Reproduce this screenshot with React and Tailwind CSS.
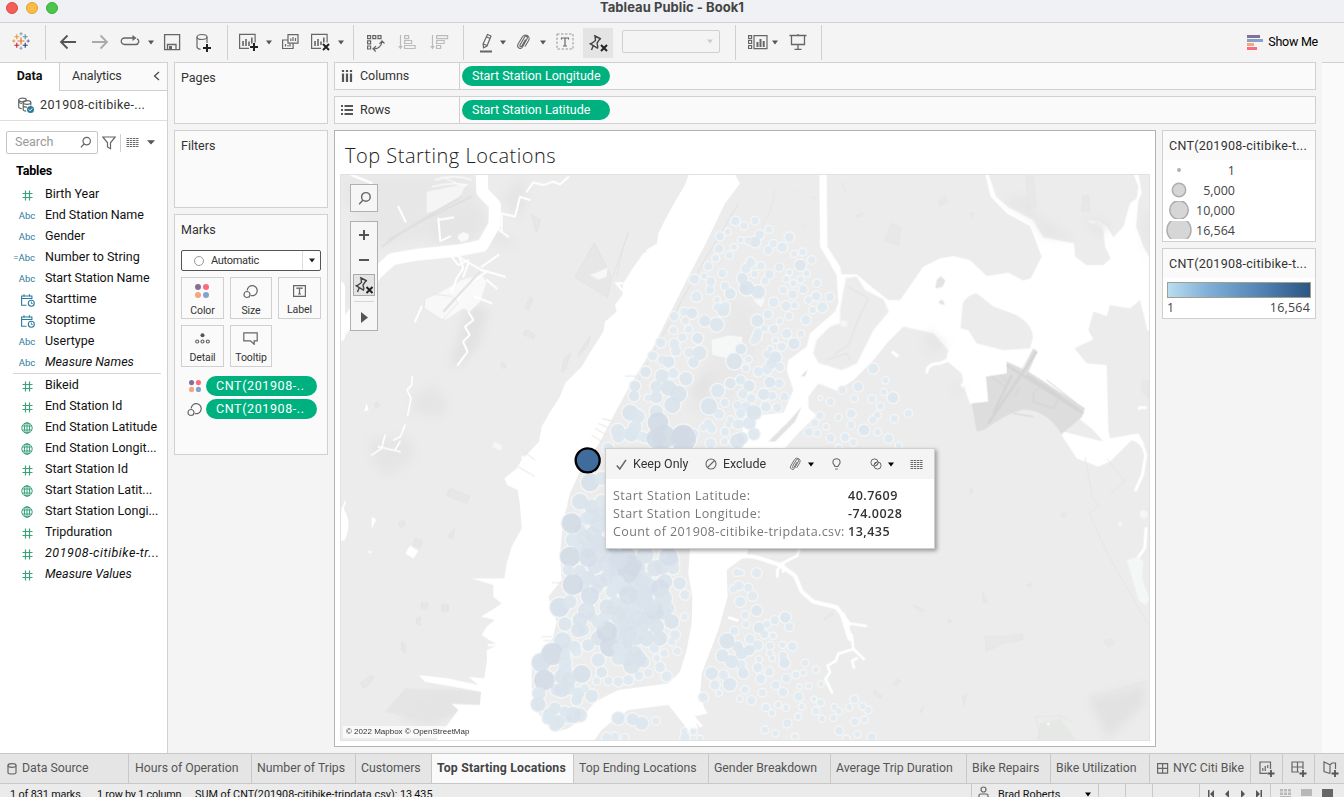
import React from "react";

const UI = "font-['Roboto','Liberation_Sans',sans-serif]";
const BOOK = "font-['Open_Sans','Noto_Sans',sans-serif]";

function Svg({ w, h, className = "", children, stroke = "#666", sw = 1.2 }) {
  return (
    <svg width={w} height={h} viewBox={`0 0 ${w} ${h}`} fill="none" stroke={stroke} strokeWidth={sw} className={`shrink-0 ${className}`}>
      {children}
    </svg>
  );
}

const Caret = ({ className = "", fill = "#555" }) => (
  <Svg w={8} h={5} className={className} stroke="none"><path d="M1 0.5h6L4 4.5z" fill={fill} /></Svg>
);

/* ---------- toolbar ---------- */

function TableauMark() {
  const plus = [
    [9, 9, 3.5, "#e8762d", 1.2], [4.8, 4.8, 2.5, "#e8953d", 1.1], [13.2, 4.8, 2.5, "#5b8fa5", 1.1], [4.8, 13.2, 2.5, "#c72037", 1.1], [13.2, 13.2, 2.5, "#1f447e", 1.1],
    [9, 1.8, 1.6, "#7099a6", 0.9], [9, 16.2, 1.6, "#7a8fc0", 0.9], [1.8, 9, 1.6, "#eb912c", 0.9], [16.2, 9, 1.6, "#5b6591", 0.9],
  ];
  return (
    <Svg w={18} h={18} className="ml-[12px] mb-[3px]">
      {plus.map(([x, y, r, c, s], i) => <path key={i} d={`M${x - r} ${y}h${2 * r}M${x} ${y - r}v${2 * r}`} stroke={c} strokeWidth={s} />)}
    </Svg>
  );
}

const Plus = ({ x, y }) => <path d={`M${x - 4} ${y}h8M${x} ${y - 4}v8`} stroke="#222" strokeWidth="2" />;
const Cross = ({ x, y }) => <path d={`M${x - 3} ${y - 3}l6 6M${x + 3} ${y - 3}l-6 6`} stroke="#222" strokeWidth="2" />;
const PinPath = () => <path d="M7 2.5l7 3.5M8 3l.5 4.5-4 3 -1.5.2 7.5 4.5 .3-1.5-.8-3.5L13 5.6M6.3 12.5L4.5 17" strokeLinejoin="round" />;

function Toolbar() {
  return (
    <div className="flex h-[39px] shrink-0 items-start pt-[2px]">
      <div className="flex h-[35px] w-[46px] items-center border-r border-[#d0d0d0]"><TableauMark /></div>
      <div className="flex h-[35px] w-[182px] items-center border-r border-[#d0d0d0]">
        <Svg w={18} h={16} className="ml-[13px] mb-[2px]" sw={1.8} stroke="#555"><path d="M17 8H2M8.5 1.500L2 8l6.500 6.500" /></Svg>
        <Svg w={18} h={16} className="ml-[14px] mb-[2px]" sw={1.8} stroke="#aaa"><path d="M1 8h15M9.500 1.500L16 8l-6.500 6.500" /></Svg>
        <Svg w={20} h={14} className="ml-[11px] mb-[3px]" sw={1.3}><path d="M13 4H4.500a3 3 0 0 0 0 6.500h11A3 3 0 0 0 17 4.800" /><path d="M12.500 1l4 3-4 3z" fill="#666" stroke="none" /></Svg>
        <Caret className="ml-[7px]" />
        <Svg w={18} h={18} className="ml-[8px] mb-px" sw={1.3}><path d="M1.600 1.600h15v15h-15zM4.500 16v-4.500h8.500V16" /><path d="M6 13h3v3.500H6z" fill="#666" stroke="none" /></Svg>
        <Svg w={18} h={20} className="ml-[14px]"><ellipse cx="7" cy="4" rx="5" ry="2.500" /><path d="M2 4v10c0 1.300 1.500 2 3.500 2.300M12 4v6" /><Plus x={12} y={15} /></Svg>
      </div>
      <div className="flex h-[35px] w-[126px] items-center border-r border-[#d0d0d0]">
        <Svg w={21} h={20} className="ml-[10px] mb-px"><path d="M11 16.400H1.600v-14h15.500v8" /><path d="M5 9v5M8 7v7M11 9.500V14M13.800 5.500v6" strokeWidth="1.600" /><Plus x={16} y={15} /></Svg>
        <Caret className="ml-[6px]" />
        <Svg w={18} h={18} className="ml-[8px] mb-[2px]"><path d="M7 1.600h10v8.500H7z" /><path d="M7 7H1.600v8.500h10.500V10M4.500 11v2.500M7 12v1.500M9 11v2.500M9.800 5.500V8M12 4v4M14.500 5V8" /></Svg>
        <Svg w={21} h={20} className="ml-[11px] mb-px"><path d="M11 16.400H1.600v-14h15.500v8" /><path d="M5 9v5M8 7v7M11 9.500V13M13.800 5.500v5" strokeWidth="1.600" /><Cross x={16} y={15} /></Svg>
        <Caret className="ml-[6px]" />
      </div>
      <div className="flex h-[35px] w-[110px] items-center border-r border-[#d0d0d0]">
        <Svg w={19} h={18} className="ml-[12px]"><path d="M1.600 1.600h3v3h-3zM6.800 1.600h3v3h-3zM12 1.600h3v3h-3zM1.600 6.800h3v3h-3zM1.600 12h3v3h-3zM7.500 14.800c4.500.3 8-2.500 8.500-7.500M10 12.300l-3 2.500 2.700 2.700M13.500 9.800l2.500-3 2.500 2.700" /></Svg>
        <Svg w={19} h={17} className="ml-[13px] mb-px" stroke="#bbb"><path d="M2.500 1v13M.8 12l1.700 2.500L4.200 12M6.600 1.600h4v3h-4zM6.600 6.500h7v3h-7zM6.600 11.500h10.500v3H6.600z" /></Svg>
        <Svg w={19} h={17} className="ml-[13px] mb-px" stroke="#bbb"><path d="M2.500 1v13M.8 12l1.700 2.500L4.200 12M6.600 1.600h11v3h-11zM6.600 6.500h7.500v3H6.600zM6.600 11.500h4v3h-4z" /></Svg>
      </div>
      <div className="flex h-[35px] w-[272px] items-center border-r border-[#d0d0d0]">
        <Svg w={14} h={20} className="ml-[15px]"><path d="M8.500 1.500l3.500 1.500-4 10-3.500 1.800-.4-4zM4.500 11l3.500 1.500M7.500 4l4 1.500" /><path d="M1 18.500h12" strokeWidth="2" /></Svg>
        <Caret className="ml-[6px]" />
        <PaperClip className="ml-[9px] mb-[2px]" />
        <Caret className="ml-[9px]" />
        <Svg w={18} h={17} className="ml-[9px] mb-[2px]" sw={1}><path d="M1 1h16v15H1z" strokeDasharray="2.500 1.500" stroke="#999" /><path d="M5.500 6.500V5h7v1.500M9 5v8M7 13h4" strokeWidth="1.200" /></Svg>
        <div className="ml-[9px] flex h-[30px] w-[30px] items-center justify-center bg-[#e4e4e4]">
          <Svg w={22} h={20} sw={1.4} stroke="#444"><PinPath /><Cross x={17} y={15} /></Svg>
        </div>
        <div className="ml-[9px] mb-[2px] flex h-[23px] w-[98px] items-center justify-end rounded-[2px] border border-[#d0d0d0] pr-[5px]"><Caret fill="#ccc" /></div>
      </div>
      <div className="flex h-[35px] w-[86px] items-center border-r border-[#d0d0d0]">
        <Svg w={21} h={16} className="ml-[11px] mb-[2px]"><path d="M1.600 1.600h3v3h-3zM1.600 6.500h3v3h-3zM1.600 11.500h3v3h-3zM7 1.600h13v13H7z" /><path d="M10.500 8v5M13.500 5v8M16.700 7v6" strokeWidth="2" /></Svg>
        <Caret className="ml-[3px]" />
        <Svg w={18} h={18} className="ml-[10px] mb-px" sw={1.300}><path d="M.5 2.500h17M2.500 2.500v9h13v-9M9 11.500V16M5.500 16.300h7M9 1v1" /></Svg>
      </div>
      <div className="flex h-[35px] flex-1 items-center justify-end pr-[26px]">
        <div className="mr-[5px] flex w-4 flex-col gap-px">
          <i className="h-[3px] w-[13px] bg-[#856f97]" /><i className="h-[3px] w-4 bg-[#84a3c8]" /><i className="h-[3px] w-[7px] bg-[#f4a67d]" /><i className="h-[3px] w-[10px] bg-[#fb6a7f]" />
        </div>
        <span className="text-[12.500px] tracking-[-0.25px] text-black">Show Me</span>
      </div>
    </div>
  );
}

function PaperClip({ className = "" }) {
  return (
    <Svg w={14} h={16} className={className} sw={1.1}>
      <path d="M4 11L8.600 3a1.500 1.500 0 0 1 2.600 1.500L6.500 13a2.600 2.600 0 0 1-4.600-2.500L6.300 3A3.600 3.600 0 0 1 12.600 6.500L9 12.500M4 11a1 1 0 0 0 1.800 1L9.500 5.500" />
    </Svg>
  );
}

/* ---------- data pane ---------- */

function FieldIcon({ kind }) {
  if (kind === "num") return <Svg w={11} h={11} stroke="#3ba27a" sw={1.2}><path d="M3.500 .5v10M7.500 .5v10M.5 3.500h10M.5 7.500h10" /></Svg>;
  if (kind === "geo") return <Svg w={12} h={12} stroke="#3ba27a" sw={1}><circle cx="6" cy="6" r="5.200" /><ellipse cx="6" cy="6" rx="2.600" ry="5.200" /><path d="M1.300 4h9.400M1.300 8h9.400M6 .8v10.400" /></Svg>;
  if (kind === "date") return <Svg w={14} h={13} stroke="#2b7b9b" sw={1.1} className="translate-x-px"><path d="M5.500 11.200H.6V2h10.300v3M.6 4.500h10.300M3 .2v2.500M8.500 .2v2.500" /><circle cx="10.300" cy="9.200" r="3" /><path d="M10.300 7.500v2h1.400" strokeWidth=".9" /></Svg>;
  return <span className="text-[9.500px] leading-none text-[#2b7b9b]">{kind === "calc" ? "=Abc" : "Abc"}</span>;
}

const Field = ({ kind, name, italic }) => (
  <div className="flex h-[21px] items-center">
    <div className={kind === "calc" ? "flex w-[30px] justify-end pr-[7px] pt-px" : "flex w-[30px] justify-center pt-px"}><FieldIcon kind={kind} /></div>
    <span className={`whitespace-nowrap pl-[3px] text-[12.500px] text-[#111] ${italic ? "italic" : ""} ${name.startsWith("2019") ? "tracking-[0.55px]" : italic ? "tracking-[0.02px]" : name.endsWith("Name") ? "tracking-[-0.08px]" : ""}`}>{name}</span>
  </div>
);

const DIMS = [["num", "Birth Year"], ["abc", "End Station Name"], ["abc", "Gender"], ["calc", "Number to String"], ["abc", "Start Station Name"], ["date", "Starttime"], ["date", "Stoptime"], ["abc", "Usertype"], ["abc", "Measure Names", true]];
const MEAS = [["num", "Bikeid"], ["num", "End Station Id"], ["geo", "End Station Latitude"], ["geo", "End Station Longit..."], ["num", "Start Station Id"], ["geo", "Start Station Latit..."], ["geo", "Start Station Longi..."], ["num", "Tripduration"], ["num", "201908-citibike-tr...", true], ["num", "Measure Values", true]];

function Magnifier({ className = "", w = 14 }) {
  return <svg width={w} height={w} viewBox="0 0 14 14" className={`shrink-0 ${className}`} fill="none" stroke="#666" strokeWidth="1.3"><circle cx="8.300" cy="5.500" r="4" /><path d="M5.400 8.600L2 12.300" /></svg>;
}

const GridLines = ({ className = "" }) => (
  <Svg w={13} h={11} className={className} sw={1}><path d="M.5 1.500h12M.5 3.500h12M.5 5.500h12M.5 7.500h12M.5 9.500h12" strokeDasharray="2.500 .7" /></Svg>
);

function DataPane() {
  return (
    <div className="flex w-[168px] shrink-0 flex-col border-r border-t border-[#d0d0d0] bg-white">
      <div className="flex h-[28px]">
        <div className="flex w-[59px] items-center justify-center pb-[2px] text-[12.500px] font-bold text-[#111]">Data</div>
        <div className="flex flex-1 items-center justify-between border-b border-l border-[#d0d0d0] bg-[#fafafa] pl-[12px] pr-[7px] pb-px text-[12.500px] text-[#333]">
          <span className="tracking-[-0.15px]">Analytics</span>
          <Svg w={7} h={10} stroke="#444"><path d="M6 1L1.500 5 6 9" /></Svg>
        </div>
      </div>
      <div className="flex h-[30px] items-center border-b border-[#dedede] pl-[18px]">
        <Svg w={18} h={17}>
          <ellipse cx="4.500" cy="3" rx="3.800" ry="1.800" /><path d="M.7 3v7c0 1 1.500 1.500 3 1.700M4 6.500c-1 0-2.500-.5-3.300-1.500" /><ellipse cx="9" cy="5.500" rx="3.800" ry="1.800" /><path d="M5.200 5.500v7c0 1 1.500 1.600 3 1.700M12.800 5.500v3M5.200 9c1 1 2.500 1.200 4 1.100" />
          <circle cx="12.500" cy="12.500" r="3.500" fill="#2b7b9b" stroke="none" /><path d="M10.800 12.500l1.300 1.300 2.200-2.500" stroke="#fff" strokeWidth="1" />
        </Svg>
        <span className="ml-[4px] text-[12.500px] tracking-[0.35px] text-[#333]">201908-citibike-...</span>
      </div>
      <div className="flex h-[43px] items-center pl-[6px]">
        <div className="flex h-[23px] w-[92px] items-center justify-between rounded-[2px] border border-[#c6c6c6] pl-2 pr-[5px] text-[12.500px] text-[#999]">Search<Magnifier w={13} /></div>
        <Svg w={14} h={14} className="ml-[4px]"><path d="M.8 1h12.400L8.500 6.800v6L5.500 11V6.800z" /></Svg>
        <div className="ml-[4px] h-[18px] w-px bg-[#d0d0d0]" />
        <GridLines className="ml-[5px]" />
        <svg width="10" height="5" viewBox="0 0 10 5" className="ml-[7px]"><path d="M1 .3h8L5 4.500z" fill="#555" /></svg>
      </div>
      <div className="h-[20px] pl-[16px] text-[12.500px] font-bold leading-[14px] tracking-[-0.15px] text-black">Tables</div>
      <div className="flex flex-col pl-[12px]">{DIMS.map((f) => <Field key={f[1]} kind={f[0]} name={f[1]} italic={f[2]} />)}</div>
      <div className="ml-[13px] mr-[6px] mb-px h-px shrink-0 bg-[#d6d6d6]" />
      <div className="flex flex-col pl-[12px]">{MEAS.map((f) => <Field key={f[1]} kind={f[0]} name={f[1]} italic={f[2]} />)}</div>
    </div>
  );
}

/* ---------- cards ---------- */

const Dots = ({ s }) => (
  <svg width={s} height={s} viewBox="0 0 14 14" className="shrink-0"><circle cx="3" cy="3" r="3" fill="#856f97" /><circle cx="11" cy="3" r="3" fill="#fb6a7f" /><circle cx="3" cy="11" r="3" fill="#f4a67d" /><circle cx="11" cy="11" r="3" fill="#84a3c8" /></svg>
);
const SizeIcon = () => <Svg w={15} h={15}><path d="M4.200 6.500a5 5 0 1 1 3.700 5" /><circle cx="4" cy="10.500" r="3" /></Svg>;

const MarkButton = ({ label, children }) => (
  <div className="flex h-[42px] flex-col items-center border border-[#d0d0d0] bg-[#fafafa] pt-[6px]">
    <div className="flex h-[14px] items-center pr-px">{children}</div>
    <span className="mt-[4px] text-[10.500px] leading-[17px] tracking-[-0.1px] text-[#333]">{label}</span>
  </div>
);

const Pill = ({ children, small }) => (
  <div className={small ? "flex h-5 w-[111px] items-center rounded-full bg-[#00b180] pl-[10px] text-[12.500px] tracking-[0.600px] text-white" : "flex h-5 w-[148px] items-center rounded-full bg-[#00b180] pl-[10px] text-[12.500px] tracking-[0.02px] text-white"}>{children}</div>
);

function Cards() {
  return (
    <div className="ml-[6px] flex w-[154px] shrink-0 flex-col gap-[6px] text-[12.500px] text-[#333]">
      <div className="h-[62px] border border-[#d0d0d0] bg-[#fafafa] pl-[6px] pt-[6px] leading-[18px]">Pages</div>
      <div className="h-[78px] border border-[#d0d0d0] bg-[#fafafa] pl-[6px] pt-[6px] leading-[18px]">Filters</div>
      <div className="h-[241px] border border-[#d0d0d0] bg-[#fafafa] px-[6px] pt-[6px] leading-[18px]">
        Marks
        <div className="mt-[11px] flex h-[21px] items-center rounded-[2px] border border-[#555] bg-white text-[11px]">
          <i className="ml-[12px] mr-[7px] size-[10px] rounded-full border border-[#999]" />
          <span className="flex-1 tracking-[-0.3px]">Automatic</span>
          <div className="flex h-full w-[18px] items-center justify-center border-l border-[#ddd]"><Caret fill="#222" /></div>
        </div>
        <div className="mt-[6px] grid grid-cols-[43px_42px_43px] gap-[6px]">
          <MarkButton label="Color"><Dots s={14} /></MarkButton>
          <MarkButton label="Size"><SizeIcon /></MarkButton>
          <MarkButton label="Label"><Svg w={13} h={12}><path d="M.6 .6h11.800v10.800H.600zM4 4V3.200h5V4M6.500 3.200V9M5 9h3" /></Svg></MarkButton>
          <MarkButton label="Detail"><Svg w={15} h={11}><circle cx="7.500" cy="2.200" r="2" fill="#555" stroke="none" /><circle cx="2.200" cy="8.500" r="1.500" /><circle cx="7.500" cy="8.500" r="1.500" /><circle cx="12.800" cy="8.500" r="1.500" /></Svg></MarkButton>
          <MarkButton label="Tooltip"><Svg w={15} h={13}><path d="M.8 .8h13.400v8h-3v3.500L7.500 8.800H.800z" /></Svg></MarkButton>
        </div>
        <div className="mt-[9px] flex items-center gap-[5px] pl-2"><Dots s={12} /><Pill small>CNT(201908-..</Pill></div>
        <div className="mt-[3px] flex items-center gap-[4px] pl-[6px]"><SizeIcon /><Pill small>CNT(201908-..</Pill></div>
      </div>
    </div>
  );
}

const Shelf = ({ name, icon, pill }) => (
  <div className="flex h-[28px] w-[982px] items-center border border-[#d0d0d0] bg-[#fafafa] text-[12.500px] text-[#333]">
    <div className="flex h-full w-[125px] items-center border-r border-[#d0d0d0] pl-[6px]">{icon}<span className="ml-[7px] tracking-[-0.05px]">{name}</span></div>
    <div className="pl-[2px]"><Pill>{pill}</Pill></div>
  </div>
);

/* ---------- map ---------- */
/* Map space: three units to a pixel, split in four tiles. */

const NW = [1201,273,13,1178,305,9,1155,319,12,1152,356,13,1197,351,9,1183,376,11,1142,385,10,1120,409,12,1162,430,12,1108,438,9,1127,455,13,1078,448,14,1125,480,12,1170,468,12,1186,491,16,1085,500,15,1146,509,9,1165,540,19,1172,527,12,1148,532,12,1048,545,12,1071,550,16,1017,559,13,1051,572,11,1109,573,17,1145,584,21,1015,601,11,1061,598,11,1042,622,12,1088,625,16,977,638,14,1018,642,15,1023,663,15,1062,668,14,1094,669,21,1076,697,16,953,678,14,982,690,14,1001,696,17,1216,658,14,1198,694,24,932,726,16,981,738,20,1015,730,15,1053,746,20,900,768,16,964,770,18,1001,774,23,1030,792,25,1012,825,24,897,798,16,940,804,11,964,802,18,1148,782,20,1186,760,16,1216,750,13,1122,829,25,1169,818,12,1207,826,12,1152,852,15,886,848,24,908,860,21,964,845,20,969,878,31,848,903,21,900,893,20,885,912,20,921,920,15,985,920,36,1045,918,34,1075,912,15,1120,882,14,1105,893,10,1130,896,13,1170,905,12,1207,883,14,1186,869,10,1216,852,11,1180,884,9,1222,445,16,1228,475,14,1217,330,7];
const NE = [45,272,11,12,287,11,87,298,10,59,314,13,45,336,16,25,332,11,2,330,8,148,322,14,100,341,11,127,352,14,85,361,12,188,366,10,162,372,9,215,390,11,181,406,17,32,397,14,18,415,14,63,408,11,118,412,12,88,433,13,44,432,10,75,453,11,200,430,9,148,427,8,138,447,9,182,448,9,160,460,9,231,460,11,20,474,22,55,486,20,130,480,11,190,478,12,158,493,13,229,498,13,206,510,11,270,501,12,101,517,14,138,528,14,164,526,10,247,532,15,218,540,10,84,553,13,147,558,11,198,570,14,52,572,18,119,573,9,74,595,10,102,598,13,54,608,13,50,622,14,42,632,11,140,611,14,182,611,10,106,631,8,162,641,17,125,650,12,3,657,16,91,656,8,82,673,12,106,682,18,25,688,10,17,715,11,95,700,16,82,718,15,55,725,14,120,711,13,2,750,14,90,757,16,118,760,13,27,768,17,71,793,17,97,797,12,8,792,14,34,805,13,133,800,12,18,830,15,78,830,15,112,833,13,42,848,22,2,850,14,28,880,18,0,882,12,42,912,17,5,925,18,400,716,15,436,751,9,355,770,14,307,780,11,431,786,9,459,803,16,343,805,10,396,807,11,271,815,11,242,804,5,421,829,10,240,857,11,295,862,9,334,851,13,412,855,10,398,870,11,463,866,11,505,850,11,224,879,11,333,885,11,258,890,8,372,900,16,206,906,12,232,910,10,413,906,10,272,924,12,315,922,12,446,925,13,340,937,10,476,946,9,296,952,8];
const SW_BASE = [800,235,26,770,245,24,775,300,26,735,285,18,800,330,26,735,335,20,780,395,22,815,385,26,845,395,26,830,360,26,875,365,28,905,400,26,760,430,22,745,455,18,785,460,18,845,425,26,865,455,26,905,450,26,930,430,20,980,395,24,1010,375,22,945,455,24,990,440,22,830,470,18,835,520,22,860,515,24,905,485,24,930,500,26,870,545,26,910,550,26,940,545,24,985,530,24,735,555,22,745,585,18,770,545,16,810,545,18,850,590,24,880,595,26,870,640,24,860,655,20,900,655,22,925,680,18,880,675,22,790,610,22,690,700,20,680,725,22,700,760,20,665,765,18,725,795,16,670,860,20,735,840,20,700,850,14,640,850,18,690,640,16,760,350,24];
const SW = [820,40,16,850,5,18,890,0,20,930,8,15,965,10,30,1045,12,38,1127,25,15,1168,20,10,1207,18,22,765,142,27,800,130,20,735,200,24,770,215,22,800,200,20,710,265,30,755,250,20,790,270,26,712,314,20,750,310,24,790,325,26,705,365,30,760,368,28,800,360,22,700,405,17,735,410,20,714,449,31,765,483,27,674,517,29,705,500,20,755,528,26,690,567,20,730,585,22,683,618,26,652,657,33,618,683,28,628,735,31,612,775,20,610,808,22,645,838,20,661,870,18,715,840,24,718,635,18,725,650,15,690,680,20,695,715,18,680,765,22,740,717,27,760,630,18,790,675,20,800,712,16,785,738,11,820,738,12,770,783,19,730,775,18,815,590,31,825,635,30,890,692,25,910,670,24,850,670,20,880,480,28,880,410,32,890,390,31,975,460,28,985,490,26,960,530,28,945,515,24,1034,445,19,1050,480,14,1015,400,18,960,400,24,1000,365,28,850,375,28,930,360,26,820,430,25,850,440,20,795,440,22,920,440,22,930,480,24,840,500,16,815,515,22,850,545,24,790,560,20,900,520,22,880,570,24,920,570,24,900,610,22,935,610,24,965,575,22,1000,520,18,1010,560,22,975,610,22,870,620,22,850,640,18,1020,600,15,1048,545,10,1010,620,11,958,640,14,965,670,10,988,655,11,1027,649,11,975,697,15,995,724,15,940,714,12,912,722,13,880,735,15,850,740,14,700,735,22,690,660,16,750,760,12,690,830,16,660,820,18,1205,412,11,1210,452,13,1195,463,11,1214,501,14,1198,588,12,1176,618,23,1208,635,16,1162,662,19,1190,680,20,1130,715,19,1165,720,14,1184,748,20,1140,750,14,1152,774,8,1105,787,14,1214,792,8,850,850,19,893,853,18,920,865,20,963,857,11,1048,888,9,1075,890,9,1050,908,14,815,908,14,840,905,12,870,908,10,1095,910,8];
const SE = [50,414,14,3,413,8,2,453,10,25,458,12,38,483,14,2,500,14,50,527,16,15,540,11,18,568,10,136,547,16,104,556,12,80,568,11,57,578,16,148,576,12,73,598,12,99,602,9,30,612,14,53,631,15,90,632,11,128,630,9,157,634,13,28,645,16,5,655,18,90,654,9,97,670,8,57,673,9,129,662,12,134,684,16,195,684,10,53,698,14,3,690,14,88,710,12,10,715,16,190,713,8,228,704,9,168,720,10,139,730,12,62,732,14,107,750,12,179,755,6,206,753,8,243,747,8,15,764,11,67,773,11,129,772,13,176,785,13,34,796,12,222,792,7,241,803,10,78,817,11,114,809,9,138,818,9,96,834,9,228,828,10,185,815,8,283,817,9,297,829,9,328,817,9,343,793,11,367,814,9,384,825,10,174,845,9,142,865,12,246,851,9,280,849,9,344,860,11,373,854,9,75,885,10,106,895,9,297,887,12,352,898,9,165,905,9,319,912,10,395,906,12];

function triples(list, dx, dy) {
  const out = [];
  for (let i = 0; i < list.length; i += 3) out.push([list[i] + dx, list[i + 1] + dy, list[i + 2]]);
  return out;
}
const STATIONS = [...triples(SW_BASE, 0, 915), ...triples(NW, 0, 0), ...triples(NE, 1215, 0), ...triples(SW, 0, 915), ...triples(SE, 1215, 915)];
const shade = (r) => (r >= 30 ? "#d2dbe5" : r >= 27 ? "#d6dfe9" : r >= 22 ? "#d9e3ec" : r >= 16 ? "#dce6ee" : r >= 12 ? "#dfe9f0" : "#e2ebf0");

function MapView() {
  return (
    <svg width="810" height="567" viewBox="15 132 2430 1701" className="block">
      <rect x="15" y="132" width="2430" height="1701" fill="#ececec" />
      <defs><filter id="soft" x="-20%" y="-20%" width="140%" height="140%"><feGaussianBlur stdDeviation="12" /></filter></defs>

      {/* relief and parks, north-west */}
      <g fill="#e5e5e5" filter="url(#soft)">
        <path d="M20 140h380l30 60-60 110-230 40-70-90-50-60z" opacity=".6" /><path d="M280 250l150-30 30 60-60 60-110 0z" />
        <path d="M240 790l60-20 40 55-30 40-80-20z" /><path d="M400 520l60 20-30 110-60 60-25-10z" fill="#e2e2e2" /><path d="M500 200l60-60 20 60-30 70z" />
        <path d="M20 500l30-60 70 30-60 70z" opacity=".5" /><path d="M100 930l120-10 20 60-80 60-40-30z" /><path d="M240 1700l140-20 60 50-160 60-90-20z" />
        <path d="M470 300l60 30 20 20-80-10z" />
      </g>
      <path d="M150 1745l60-70 230 10 0 40-10 25-60-5-90 30z" fill="#e4e4e4" opacity=".8" />
      <path d="M275 185l120-25-20 40-70 40-30 10z" fill="#f5f5f5" />
      <path d="M160 330q90-55 250-130M140 350q80-60 240-150" stroke="#dedede" strokeWidth="5" fill="none" />
      <path d="M300 150q60-20 110 0M290 170q60-15 110-5M320 140l70 30" stroke="#fafafa" strokeWidth="4" fill="none" />
      <path d="M370 315l15-9 18 8-4 16-20 6-10-10z" fill="#f9f9f9" />
      <g stroke="#e0e0e0" strokeWidth="2" fill="#e7e7e7">
        <path d="M778 338l-58 104 98 60 12-60z" /><path d="M845 440q15-80 35-135M880 310l-30 80-15 50" fill="none" />
        <path d="M570 530l15-28 10 6-16 32zM572 600l28 14-4 12-30-12zM345 1075l58 24-8 20-60-22zM590 255l26 14-12 38-8-26zM125 815l10 10-8 10-10-8zM500 697l14 8-6 12-10-8zM190 1180l16-8 4 12-14 10zM345 1210l14-14-6 30-12-4zM260 1418l20 2-6 18-16-4zM76 1660l32-26 10 8-30 34zM320 1425h20v18h-20zM245 1465l12-6-2 26-10-4zM200 1535l12 10-2 24-10-8zM240 1225l22 10-8 18-20-8z" />
        <path d="M680 725l8-40 18-15-14 48zM730 670l36-52-8 30-26 30z" />
      </g>
      <path d="M790 425l28-12-4 28-24 8-26-14z" fill="#f6f8f7" />

      {/* Hackensack river and creeks */}
      <g stroke="#fff" fill="none" strokeLinejoin="round" strokeLinecap="round">
        <path d="M440 125l2 60 38 40-2 60-36 62-70 14-120 12-80 14-50 45-60 110-50 70" strokeWidth="36" strokeLinecap="butt" />
        <path d="M15 620V470" strokeWidth="30" />
        <path d="M500 300v-50l40 10 15-60 30 10M575 185l20-28 30 8 30-10 20 8 25-22M310 265l6 68 30-14M310 270l45-8M190 230l22 45" strokeWidth="6" />
        <path d="M370 380l70 40 70 20M440 410l50-35M350 380l20 25 30-15M455 450l30 25M420 500l50 20M480 290l40 30" strokeWidth="6" />
        <path d="M375 385l10 30-20 30-15 40M400 400l-15 40M345 545l50-80 60-40M260 530l-20 45M400 545l15 25-25 20 14 25-20 20 14 30-30 40" strokeWidth="6" />
        <path d="M232 740l-2 25-14 15 12 25-10 50M210 885l-14 35-20 10M110 975l30-20 10-40M130 950l65 15M180 960l15-25M30 1115q-8 20-8 45" strokeWidth="5" />
        <path d="M50 135l60 24" strokeWidth="7" />
      </g>
      <path d="M270 510l50-25 60-35 60-15 15 20-20 60-30 30-20-10-55 35z" fill="#fff" opacity=".7" />
      <path d="M270 505l30-12 50 5 20 20-48 52-55-35z" fill="#f8f8f8" stroke="#e6e6e6" strokeWidth="3" />
      <path d="M325 545l110-120" stroke="#e3e3e3" strokeWidth="7" />
      <path d="M95 820l6 20-14 4zM225 1247l25 16-15 22-24-15zM110 1160l14 8-14 28zM100 1262l12 3-10 6zM20 1130q35 40 10 100l-15 5z" fill="#fff" />
      <path d="M480 935l22 12-6 16-26-14z" fill="#f4f7f6" />

      {/* Hudson and upper bay */}
      <path fill="#fff" d="M1062 130L1050 165 1020 215 990 270 970 310 965 345 925 370 890 420 865 460 862 495 840 525 845 545 810 575 805 605 770 660 740 710 690 760 675 800 640 855 620 890 612 935 560 990 545 1015 508 1045 516 1065 548 1080 555 1125 560 1195 530 1250 515 1300 508 1345 410 1345 475 1365 475 1400 500 1420 478 1435 438 1460 480 1470 455 1490 440 1515 462 1530 490 1545 455 1560 456 1590 448 1645 400 1640 430 1665 340 1645 250 1635 270 1655 438 1685 435 1725 350 1722 370 1740 300 1835H775L800 1800 830 1775 880 1740 1000 1725 1060 1800 1090 1795 1075 1760 1115 1750 1095 1700 1100 1630 1150 1500 1178 1400 1175 1320 1235 1275 1275 1140 1340 930 1425 840 1230 860 1215 945 1065 1255 1060 1330 1072 1400 1070 1480 1055 1560 1035 1625 1000 1660 850 1680 780 1715 740 1765 700 1795 660 1805 600 1740 590 1670 590 1600 650 1535 665 1475 640 1400 680 1350 675 1270 685 1170 705 1090 745 1000 790 945 850 830 900 740 950 660 1000 560 1060 440 1110 345 1170 220 1215 160 1198 130z" />
      <g stroke="#e6e6e6" strokeWidth="3"><path d="M870 738h32M800 865l32 8M790 880l32 14M780 895l36 20M770 915l34 22M560 960l40 30M550 1010l50 30M650 1358h30M620 1520h30M625 1532h28" /></g>
      <path d="M965 345l-25 15 20 8-35 12 30 18M865 460l-20 0 18 22M845 525l18 10M812 575l15 10M560 980l40 25M458 1545h32M460 1575h30M675 1125l22 5" stroke="#fff" strokeWidth="7" fill="none" />
      <path d="M1205 215L1060 460 905 745" stroke="#e4e4e4" strokeWidth="4" fill="none" transform="translate(6 4)" />

      {/* Central Park */}
      <path d="M1190 500l70 30 20 70-80 200-60 60-80-20 60-140z" fill="#e8e8e8" filter="url(#soft)" />
      <path d="M1100 740l40-20-30 80-50 0z" fill="#e2e2e2" filter="url(#soft)" />
      <path d="M1130 630l50-14 42 4-2 40-28 30-60-16z" fill="#f5f8f7" /><path d="M1255 510l36-4-12 26z" fill="#f7f9f8" />

      {/* Harlem river, East river and sound */}
      <g transform="translate(1215 0)">
        <path fill="#fff" d="M238 130L240 350 290 435 295 520 285 545 210 610 200 650 145 690 140 720 160 780 130 850 50 935 130 960 165 920 230 855 205 835 205 800 235 760 290 782 340 750 400 690 440 640 490 590 580 610 625 660 618 690 665 730 672 770 690 822 745 815 738 740 800 730 800 695 845 715 880 655 892 665 865 725 1035 835 1012 862 1060 900 1090 935 970 905 965 915 1010 985 1075 1010 1110 995 1175 930 1215 945 1195 910 1110 925 1105 900 1100 705 1040 700 1003 655 1060 628 1045 600 1060 545 1100 558 1110 525 1170 535 1200 510 1222 600 1232 605V390L1210 350 1188 290 1195 212 1205 190 1195 130H1180L1195 170 1190 205 1170 220 1150 290 1120 322 1100 290 1075 272 1040 272 1090 300 1095 350 1112 385 1090 405H1040L1005 380 1002 340 910 322 880 270 805 232 768 200 745 130H735L752 200 800 250 870 288 905 380 872 445 850 452 805 428 740 438 690 390 640 378 600 385 550 410 480 510 445 510 400 475 350 433 305 433 300 410 262 350 260 130z" />
        <path fill="#ececec" stroke="#f5f5f5" strokeWidth="3" d="M318 445L350 440 375 480 430 508 446 545 400 600 350 700 305 720 235 698 220 670 230 630 270 590 300 580 300 540z" />
        <path d="M325 470l60 35-25 50-35 90-45 30M260 690l60-20 10 20" stroke="#e2e2e2" strokeWidth="3" fill="none" />
        <path d="M298 572h24v18h-18z" fill="#f4f7f6" />
        <path fill="#ececec" d="M668 520Q680 495 710 490L760 530 830 555Q880 585 878 625L870 655 790 660 710 640 685 600 662 595z" />
        <path fill="#e3e3e3" d="M590 450l12-12 14 14-8 18-22 6zM595 515l12-6 8 16-16-4zM182 740l20-22-6 20zM150 870l35-40-20 45-60 60-20 0z" />
        <path fill="#dddddd" d="M738 740L800 730 800 695 850 718 880 655 892 665 865 725 1035 835 1025 862 965 912Q920 840 850 838Q800 850 735 898L710 905 695 820 745 815z" />
        <path d="M800 705L1030 850M890 665L745 880M815 735L760 850M860 735L1015 838" stroke="#d4d4d4" strokeWidth="7" fill="none" />
        <path d="M755 740l40 30M780 735l30 25M880 790l20-20 60 25-20 40-60-20zM840 770l-15 25M900 750l110 90M920 750l90 70M820 850l60 10" stroke="#d4d4d4" strokeWidth="3" fill="none" />
        <path d="M560 730q0-30 40-30l50-20" stroke="#fff" strokeWidth="9" fill="none" /><path d="M665 770l30-35" stroke="#fff" strokeWidth="12" /><path d="M455 665l20 14M1195 838l5-5h20" stroke="#fff" strokeWidth="9" fill="none" />
        <g fill="#e5e5e5" filter="url(#soft)"><path d="M790 210l70-10 30 60 90 50 10 15-80-10-30-50z" /><path d="M1040 265l60 10-10 40-40-20zM1210 250l25 0v130l-20-50z" /><path d="M560 600l60 50-60 20zM630 770l35 0-5 30z" /></g>
        <g stroke="#e2e2e2" strokeWidth="2" fill="#e8e8e8"><path d="M455 280l26 12-5 55-42-16zM595 215l20-16 8 14-22 14zM345 258l24-8-8 10zM1028 198h18v22h-18zM1025 225h24v18h-24zM857 135l10 100 20-4-8-96M690 250l8-2v14zM1205 755h22v50l-20-20z" /><path d="M105 180q-5 60-40 110M318 186l-12-30M160 180l12 8M215 200l18 6M190 285l10 6" fill="none" /></g>
      </g>

      {/* Queens and Brooklyn */}
      <g transform="translate(1215 915)">
        <g stroke="#fff" fill="none" strokeLinejoin="round" strokeLinecap="round">
          <path d="M-40 390q40-40 100-20l60 20 45 32 20 48 35 30 70 17 38 50" strokeWidth="12" /><path d="M120 388l50-25 10-25M112 425v-20l12-15M130 410v-20" strokeWidth="8" />
          <path d="M308 540l22 70" strokeWidth="16" /><path d="M328 565l50 8M335 600l5 42 32 30M350 670l-14 8 6 20M340 642l-45 14-8 22-25 14 8 20-14 20 20 40" strokeWidth="8" />
          <path d="M1175 10q35 10 42 50l-10 60-20 45M1218 280l-4 60-25 35" strokeWidth="9" />
        </g>
        <path d="M1160 375l35-10 15 15-4 50 22 60-10 20-22-15z" fill="#f3f7f6" /><circle cx="1211" cy="238" r="12" fill="#f6f6f6" /><circle cx="1140" cy="268" r="6" fill="#f8f8f8" />
        <path d="M1045 795l30-15 140-30-2 60-110 100-30-60z" fill="#e2e2e2" filter="url(#soft)" /><path d="M890 915l10-50 60-15 50 65z" fill="#e5e8e5" /><circle cx="925" cy="867" r="5" fill="#f7f7f7" />
        <g stroke="#e3e3e3" strokeWidth="2" fill="#e8e8e8"><path d="M735 605l50 0 62-8 2 16-60 12-50 25zM520 512l10 0 22 14-8 6zM728 470l14 32-12 0zM1090 620l20-8 14 12-18 12zM402 765l24 18-6 8-18-14zM460 745l14-14 8 8-14 14zM668 785l12-8-8 34zM250 552l28-22 2 8-22 14zM962 238l12-6 6 8-12 6zM860 452l16-8-4 12zM690 160l12 8-12 10zM625 555l14 4-12 6zM540 825l10-8-6 16z" /><path d="M1035 65l22 120 20 30-30 20 60 130 115 200M1100 70l55 70-50 40M1045 790l185-55M900 915l-12-70 75-2 35 20" fill="none" /></g>
      </g>
      <path d="M1020 1725l50 90M1040 1720l60 70M1055 1700l60 50M1180 1462l30 10" stroke="#fff" strokeWidth="9" />

      <g fill="none" stroke="#f4f5f5" strokeWidth="8">{STATIONS.map(([x, y, r], i) => <circle key={i} cx={x} cy={y} r={r} />)}</g>
      <g fillOpacity=".88">{STATIONS.map(([x, y, r], i) => <circle key={i} cx={x} cy={y} r={r} fill={shade(r)} />)}</g>
      <circle cx="758" cy="991" r="36" fill="#3f6c9d" stroke="#000" strokeWidth="7" />
    </svg>
  );
}

function Tooltip() {
  return (
    <div className="absolute left-[265px] top-[274px] w-[330px] border border-[#cfcfcf] bg-white shadow-[2px_2px_4px_rgba(0,0,0,0.35)]">
      <div className="flex h-[30px] items-center bg-[#f4f4f4] pl-[10px] text-[12.500px] text-[#333]">
        <Svg w={11} h={11} sw={1.500}><path d="M.8 6.500L3.800 10 10 .8" /></Svg>
        <span className="ml-[6px] w-[55px] whitespace-nowrap">Keep Only</span>
        <Svg w={12} h={12} className="ml-[17px]" sw={1.100}><circle cx="6" cy="6" r="5" /><path d="M2.500 9.500l7-7" /></Svg>
        <span className="ml-[6px] w-[42px] tracking-[-0.05px]">Exclude</span>
        <PaperClip className="ml-[23px] scale-[0.85]" /><Caret fill="#000" className="ml-[5px]" />
        <Svg w={9} h={12} className="ml-[17px]" sw={1.100}><path d="M3 8.500C3 7 .9 6.500 .9 4.300a3.600 3.600 0 0 1 7.200 0C8.100 6.500 6 7 6 8.500zM3.200 11h2.600" /></Svg>
        <Svg w={12} h={12} className="ml-[29px]" sw={1}><circle cx="4.500" cy="4.500" r="3.600" /><circle cx="7.500" cy="7.500" r="3.600" /><path d="M4 7l3.500-3.500M5.500 8L8 5.500" /></Svg>
        <Caret fill="#000" className="ml-[5px]" /><GridLines className="ml-[15px]" />
      </div>
      <div className={`grid grid-cols-[235px_1fr] pb-[7px] pl-[7px] pt-[8px] text-[12.500px] leading-[18px] text-[#787878] ${BOOK}`}>
        <span className="tracking-[0.48px]">Start Station Latitude:</span><b className="font-semibold tracking-[0.5px] text-[#333]">40.7609</b>
        <span className="tracking-[0.45px]">Start Station Longitude:</span><b className="font-semibold tracking-[0.5px] text-[#333]">-74.0028</b>
        <span className="whitespace-nowrap tracking-[0.4px]">Count of 201908-citibike-tripdata.csv:</span><b className="font-semibold tracking-[0.5px] text-[#333]">13,435</b>
      </div>
    </div>
  );
}

function Sheet() {
  return (
    <div className="w-[822px] border border-[#b3b3b3] bg-white pl-[5px]">
      <div className={`h-[43px] pl-[5px] pt-[10px] text-[20px] font-light leading-[30px] tracking-[0.5px] text-[#222] ${BOOK}`}>Top Starting Locations</div>
      <div className="relative h-[567px] w-[810px] outline outline-1 -outline-offset-1 outline-[#e2e2e2]">
        <MapView />
        <div className="absolute left-[10px] top-[10px] flex size-[28px] items-center justify-center border border-[#b0b0b0] bg-[#f6f6f6]"><Magnifier w={15} /></div>
        <div className="absolute left-[10px] top-[47px] flex h-[110px] w-[28px] flex-col items-center border border-[#b0b0b0] bg-[#f6f6f6]">
          <Svg w={10} h={10} className="mt-[8px]" sw={2} stroke="#555"><path d="M0 5h10M5 0v10" /></Svg>
          <Svg w={10} h={2} className="mt-[19px]" sw={4} stroke="#555"><path d="M0 0h10" /></Svg>
          <div className="mt-[13px] flex h-[22px] w-[22px] items-center justify-center border border-[#aaa] bg-[#e4e4e4]"><Svg w={22} h={20} sw={1.400} stroke="#444"><PinPath /><Cross x={16.500} y={15} /></Svg></div>
          <div className="mt-[5px] h-px w-5 bg-[#d6d6d6]" />
          <Svg w={7} h={11} className="mt-[10px]" stroke="none"><path d="M0 0l7 5.500L0 11z" fill="#555" /></Svg>
        </div>
        <div className="absolute bottom-[3px] left-[3px] h-[12px] w-[128px] whitespace-nowrap bg-white/70 pl-[3px] font-['Liberation_Sans',sans-serif] text-[8px] leading-[12px] text-[#333]">© 2022 Mapbox © OpenStreetMap</div>
        <Tooltip />
      </div>
    </div>
  );
}

/* ---------- legends ---------- */

const SizeRow = ({ label, d }) => (
  <div className="flex h-5 items-center">
    <svg width="28" height="18" viewBox="-14 -9 28 18"><circle r={d} fill="#d6d6d6" stroke="#adadad" strokeWidth="1.500" /></svg>
    <span className="-ml-px w-[43px] pt-[2px] text-right">{label}</span>
  </div>
);

function Legends() {
  return (
    <div className="flex w-[154px] flex-col gap-[6px]">
      <div className="h-[112px] border border-[#d0d0d0] bg-white">
        <div className="h-[29px] whitespace-nowrap bg-[#fafafa] pl-[6px] text-[12.500px] leading-[29px] tracking-[0.28px] text-[#333]">CNT(201908-citibike-t...</div>
        <div className={`flex flex-col pl-[2px] text-[12.500px] text-[#444] ${BOOK}`}>
          <SizeRow label="1" d={1.2} /><SizeRow label="5,000" d={6.700} /><SizeRow label="10,000" d={9.300} /><SizeRow label="16,564" d={12} />
        </div>
      </div>
      <div className="h-[71px] border border-[#d0d0d0] bg-white">
        <div className="h-[29px] whitespace-nowrap bg-[#fafafa] pl-[6px] text-[12.500px] leading-[29px] tracking-[0.28px] text-[#333]">CNT(201908-citibike-t...</div>
        <div className="mx-[4px] mt-[4px] h-4 border border-[#a59e88] bg-[linear-gradient(90deg,#b9ddf1_0%,#7fb0d6_28%,#4f80b2_68%,#2a5783_100%)]" />
        <div className={`ml-[4px] mr-[5px] flex justify-between text-[12.500px] leading-[20px] text-[#444] ${BOOK}`}><span>1</span><span className="tracking-[0.2px]">16,564</span></div>
      </div>
    </div>
  );
}

/* ---------- bottom ---------- */

const Tab = ({ w, children, active }) => (
  <div className={`${w} flex shrink-0 items-center whitespace-nowrap border-r border-[#c8c8c8] pl-[5px] text-[12.300px] ${active ? "bg-[#fafafa] font-bold tracking-[0.17px] text-[#444]" : "tracking-[-0.02px] text-[#555]"}`}>{children}</div>
);

function Tabs() {
  return (
    <div className="flex h-[31px] shrink-0 border-y border-[#c8c8c8] bg-[#e5e5e5]">
      <Tab w="w-[129px]"><Svg w={10} h={12} className="ml-[2px] mr-[5px]"><ellipse cx="5" cy="2.500" rx="4" ry="1.800" /><path d="M1 2.500v7c0 2 8 2 8 0v-7" /></Svg>Data Source</Tab>
      <Tab w="w-[123px]"><span className="pl-px">Hours of Operation</span></Tab>
      <Tab w="w-[104px]">Number of Trips</Tab>
      <Tab w="w-[76px]">Customers</Tab>
      <Tab w="w-[142px]" active>Top Starting Locations</Tab>
      <Tab w="w-[135px]">Top Ending Locations</Tab>
      <Tab w="w-[122px]">Gender Breakdown</Tab>
      <Tab w="w-[136px]">Average Trip Duration</Tab>
      <Tab w="w-[84px]">Bike Repairs</Tab>
      <Tab w="w-[99px]">Bike Utilization</Tab>
      <Tab w="w-[101px]"><Svg w={12} h={11} className="ml-[2px] mr-[4px]"><path d="M.6 .6h10v9.500H.6zM5.600 .6v9.500M.6 5.300h10" /></Svg>NYC Citi Bike</Tab>
      <Tab w="w-[32px]"><Svg w={17} h={16} className="ml-[3px]"><path d="M8 12.400H1V1h10.500v7M3.800 7v3M6.200 5v5M8.700 4v3" /><path d="M8.500 12.500h7M12 9v7" stroke="#555" strokeWidth="1.800" /></Svg></Tab>
      <Tab w="w-[32px]"><Svg w={17} h={16} className="ml-[3px]"><path d="M8 11H1V1h11v7M6.500 1v10M1 6h11" /><path d="M8.500 12.500h7M12 9v7" stroke="#555" strokeWidth="1.800" /></Svg></Tab>
      <Tab w="w-[32px]"><Svg w={17} h={16} className="ml-[3px]"><path d="M7 12.500L1 10.500V1l3.500 1.500L7 4l2-2h3.500v6M7 4v8.500" /><path d="M8.500 12.500h7M12 9v7" stroke="#555" strokeWidth="1.800" /></Svg></Tab>
    </div>
  );
}

function StatusBar() {
  return (
    <div className="flex h-[13px] shrink-0 overflow-hidden bg-[#ebebeb] text-[10.800px] leading-[21px] text-[#111]">
      <div className="flex w-[972px] shrink-0 whitespace-nowrap border-r border-[#c8c8c8] pl-[10px]">
        <span className="w-[87px] tracking-[-0.12px]">1 of 831 marks</span><span className="w-[98px] tracking-[-0.2px]">1 row by 1 column</span><span>SUM of CNT(201908-citibike-tripdata.csv): 13,435</span>
      </div>
      <div className="flex w-[127px] shrink-0 border-r border-[#c8c8c8] pl-[6px]">
        <Svg w={11} h={14} className="mt-[2px]"><circle cx="5.500" cy="3.500" r="2.500" /><path d="M1 12V9.500q0-1.500 1.500-1.500h6Q10 8 10 9.500V12" /></Svg>
        <span className="ml-[9px] w-[78px]">Brad Roberts</span><Caret fill="#000" className="mt-[8px] ml-[8px]" />
      </div>
      <div className="w-[27px] shrink-0 border-r border-[#c8c8c8]" /><div className="w-[27px] shrink-0 border-r border-[#c8c8c8]" /><div className="w-[47px] shrink-0 border-r border-[#c8c8c8]" />
      <div className="flex w-[71px] shrink-0 border-r border-[#c8c8c8]">
        <svg width="70" height="13" viewBox="0 0 70 13" fill="#555"><path d="M8 6h1.500v8H8zM14 6v8l-4-4zM29 6v8l-4-4zM41 6v8l4-4zM56 6v8l4-4zM60.500 6H62v8h-1.500z" /></svg>
      </div>
      <svg width="73" height="13" viewBox="0 0 73 13"><path d="M9 5h3v2.500H9zM13 5h3v2.500h-3zM17 5h3v2.500h-3zM9 8.500h3V11H9zM13 8.500h3V11h-3zM17 8.500h3V11h-3zM9 12h11v1H9zM30 5h11v7H30z" fill="#b8b8b8" /><path d="M51 5h11v8H51z" fill="#666" /></svg>
    </div>
  );
}

export default function App() {
  return (
    <div className={`flex h-[797px] w-[1344px] flex-col overflow-hidden bg-[#f4f4f4] ${UI}`}>
      <div className="grid h-[23px] shrink-0 grid-cols-3 border-b border-[#cfcfd1] bg-[#eff1f4]">
        <div className="flex gap-2 pl-[6px] pt-[2px]">
          <i className="size-3 rounded-full border border-[#e14943] bg-[#f25e58]" /><i className="size-3 rounded-full border border-[#e0a03a] bg-[#fabc42]" /><i className="size-3 rounded-full border border-[#3dab3e] bg-[#4bc54b]" />
        </div>
        <div className="whitespace-nowrap text-center font-['Inter',sans-serif] text-[13px] font-bold leading-[15px] tracking-[0.05px] text-[#444]">Tableau Public - Book1</div>
      </div>
      <Toolbar />
      <div className="flex min-h-0 flex-1">
        <DataPane />
        <Cards />
        <div className="ml-[6px] flex w-[982px] shrink-0 flex-col gap-[6px] pb-[6px]">
          <Shelf name="Columns" pill="Start Station Longitude" icon={<Svg w={12} h={12} sw={2.200} stroke="#555"><path d="M2 0v2M6 0v2M10 0v2M2 3.500V12M6 3.500V12M10 3.500V12" /></Svg>} />
          <Shelf name="Rows" pill="Start Station Latitude" icon={<Svg w={12} h={12} sw={1.900} stroke="#555"><path d="M0 2h2M0 6h2M0 10h2M3.500 2H12M3.500 6H12M3.500 10H12" /></Svg>} />
          <div className="flex min-h-0 flex-1 justify-between"><Sheet /><Legends /></div>
        </div>
        <div className="ml-[6px] flex-1 border-t border-[#d0d0d0] bg-[#fafafa]" />
      </div>
      <Tabs />
      <StatusBar />
    </div>
  );
}
